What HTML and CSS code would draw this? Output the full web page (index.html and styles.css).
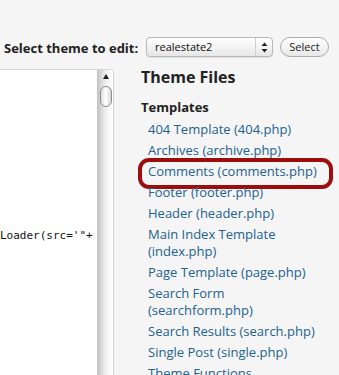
FILE: index.html
```html
<!DOCTYPE html>
<html>
<head>
<meta charset="utf-8">
<title>Edit Themes</title>
<link rel="stylesheet" href="styles.css">
</head>
<body>
<div class="page">
  <div class="topbar">
    <label class="theme-label">Select theme to edit:</label>
    <div class="select-box">
      <span class="select-value">realestate2</span>
      <span class="select-arrows">
        <svg width="7" height="11" viewBox="0 0 7 11"><path d="M3.5 0.5 L6.5 4 L0.5 4 Z" fill="#222"/><path d="M3.5 10.5 L6.5 7 L0.5 7 Z" fill="#222"/></svg>
      </span>
    </div>
    <button class="btn">Select</button>
  </div>
  <div class="editor">
    <div class="code-box">
      <pre class="code">Loader(src='"+</pre>
      <div class="scrollbar">
        <div class="sb-arrow"></div>
        <div class="sb-thumb"></div>
      </div>
    </div>
    <div class="sidebar">
      <h3 class="side-title">Theme Files</h3>
      <h4 class="side-sub">Templates</h4>
      <ul class="file-list">
        <li><a href="#">404 Template (404.php)</a></li>
        <li><a href="#">Archives (archive.php)</a></li>
        <li class="highlight"><a href="#">Comments (comments.php)</a></li>
        <li><a href="#">Footer (footer.php)</a></li>
        <li><a href="#">Header (header.php)</a></li>
        <li><a href="#">Main Index Template (index.php)</a></li>
        <li><a href="#">Page Template (page.php)</a></li>
        <li><a href="#">Search Form (searchform.php)</a></li>
        <li><a href="#">Search Results (search.php)</a></li>
        <li><a href="#">Single Post (single.php)</a></li>
        <li><a href="#">Theme Functions (functions.php)</a></li>
      </ul>
    </div>
  </div>
</div>
</body>
</html>
```
FILE: styles.css
```css
html, body {
  margin: 0;
  padding: 0;
}
body {
  background: #f5f5f5;
  font-family: "Open Sans", "DejaVu Sans", sans-serif;
  color: #222;
  width: 339px;
  height: 375px;
  overflow: hidden;
}
.topbar {
  display: flex;
  align-items: center;
  padding: 37px 0 0 4px;
  height: 20px;
}
.theme-label {
  width: 142px;
  font-weight: 700;
  font-size: 13px;
  line-height: 20px;
  padding-top: 1px;
  color: #222;
  white-space: nowrap;
}
.select-box {
  box-sizing: border-box;
  width: 127px;
  height: 20px;
  display: flex;
  align-items: center;
  border: 1px solid #b8b8b8;
  border-radius: 4px;
  background: linear-gradient(#ffffff, #f3f3f3 50%, #e6e6e6);
  box-shadow: 0 1px 1px rgba(0,0,0,0.08);
}
.select-value {
  flex: 1;
  padding-left: 8px;
  font-size: 11px;
  line-height: 18px;
  color: #111;
}
.select-arrows {
  width: 16px;
  height: 18px;
  border-left: 1px solid #cfcfcf;
  display: flex;
  align-items: center;
  justify-content: center;
}
.select-arrows svg {
  display: block;
}
.btn {
  box-sizing: border-box;
  margin-left: 7px;
  width: 49px;
  height: 20px;
  padding: 0;
  border: 1px solid #ababab;
  border-radius: 10px;
  background: linear-gradient(#ffffff, #f1f1f1 60%, #e7e7e7);
  font-family: "Open Sans", "DejaVu Sans", sans-serif;
  font-size: 11px;
  line-height: 18px;
  color: #222;
}
.editor {
  display: flex;
  align-items: flex-start;
  margin-top: 9.5px;
}
.code-box {
  box-sizing: border-box;
  margin-top: 2.5px;
  width: 114px;
  height: 340px;
  display: flex;
  background: #fff;
  border-top: 1px solid #d6d6d6;
  border-right: 1px solid #cfcfcf;
  border-top-right-radius: 4px;
  overflow: hidden;
}
.code {
  flex: 1;
  margin: 0;
  padding: 158px 0 0 0;
  font-family: "DejaVu Sans Mono", "Liberation Mono", monospace;
  font-size: 11px;
  line-height: 15px;
  color: #111;
  white-space: pre;
  overflow: hidden;
}
.scrollbar {
  width: 15px;
  border-left: 1px solid #c4c4c4;
  background: linear-gradient(to right, #c6c6c6 0%, #e4e4e4 35%, #f6f6f6 65%, #ffffff 100%);
  display: flex;
  flex-direction: column;
  align-items: center;
}
.sb-arrow {
  margin-top: 4px;
  width: 0;
  height: 0;
  border-left: 3px solid transparent;
  border-right: 3px solid transparent;
  border-bottom: 5px solid #1e1e1e;
}
.sb-thumb {
  box-sizing: border-box;
  margin-top: 7px;
  width: 12px;
  height: 21px;
  border: 1px solid #8c8c8c;
  border-radius: 6px;
  background: linear-gradient(to right, #dcdcdc, #ffffff 45%, #f4f4f4 65%, #d4d4d4);
}
.sidebar {
  margin-left: 27px;
  width: 198px;
}
.side-title {
  margin: 0;
  font-size: 16px;
  line-height: 20px;
  font-weight: 700;
  color: #222;
}
.side-sub {
  margin: 12.7px 0 0;
  font-size: 13px;
  line-height: 17.5px;
  font-weight: 700;
  color: #222;
}
.file-list {
  list-style: none;
  margin: 4.5px 0 0;
  padding: 0 11px 0 7px;
}
.file-list li {
  position: relative;
  font-size: 13px;
  line-height: 17.5px;
  margin-bottom: 3.4px;
}
.file-list a {
  color: #22628f;
  text-decoration: none;
}
.file-list li.highlight::after {
  content: "";
  position: absolute;
  left: -10px;
  top: -5.2px;
  width: 195px;
  height: 31px;
  box-sizing: border-box;
  border: 4px solid #9c0d0d;
  border-radius: 11px;
}
```
